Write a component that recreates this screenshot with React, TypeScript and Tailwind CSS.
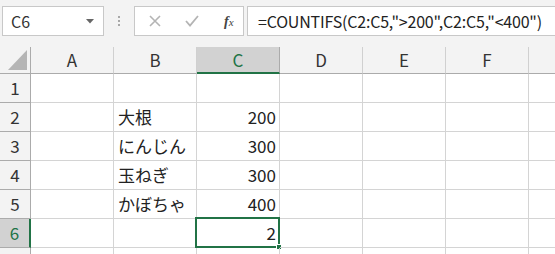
import React from "react";

const font = { fontFamily: '"Noto Sans CJK JP", "Noto Sans", sans-serif' };

const cols = ["A", "B", "C", "D", "E", "F", "G"];
const rows: { b?: string; c?: string }[] = [
  {},
  { b: "大根", c: "200" },
  { b: "にんじん", c: "300" },
  { b: "玉ねぎ", c: "300" },
  { b: "かぼちゃ", c: "400" },
  { c: "2" },
  {},
];

export default function App() {
  return (
    <div className="w-[555px] h-[254px] overflow-hidden bg-white text-[#222]" style={font}>
      {/* toolbar */}
      <div className="h-[47px] bg-[#f3f3f3] flex items-start pt-[6px]">
        <div className="ml-[2px] w-[102px] h-[30px] bg-white border border-[#c8c8c8] flex items-center justify-between pl-[8px] pr-[9px]">
          <span className="text-[16px] text-[#333]">C6</span>
          <svg width="8" height="5" viewBox="0 0 8 5">
            <path d="M0 0 L8 0 L4 4.5 Z" fill="#666" />
          </svg>
        </div>
        <div className="w-[30px] h-[30px] flex flex-col items-center justify-center gap-[2px]">
          <div className="w-[2px] h-[2px] bg-[#a8a8a8]" />
          <div className="w-[2px] h-[2px] bg-[#a8a8a8]" />
          <div className="w-[2px] h-[2px] bg-[#a8a8a8]" />
        </div>
        <div className="w-[110px] h-[30px] bg-white border border-[#c8c8c8] flex items-center">
          <svg className="ml-[14px]" width="12" height="12" viewBox="0 0 12 12">
            <path d="M1 1 L11 11 M11 1 L1 11" stroke="#b4b4b4" strokeWidth="1.6" />
          </svg>
          <svg className="ml-[24px]" width="14" height="12" viewBox="0 0 14 12">
            <path d="M1 6 L5 10.5 L13 1" stroke="#b4b4b4" strokeWidth="1.8" fill="none" />
          </svg>
          <span
            className="ml-[25px] text-[14px] italic text-[#444]"
            style={{ fontFamily: '"Liberation Serif", serif' }}
          >
            <span className="font-bold">f</span>
            <span className="text-[11px]">x</span>
          </span>
        </div>
        <div className="ml-[3px] flex-1 h-[30px] bg-white border-y border-l border-[#c8c8c8] flex items-center pl-[10px]">
          <span className="text-[16px] text-[#222] whitespace-nowrap tracking-[-0.2px]">
            =COUNTIFS(C2:C5,"&gt;200",C2:C5,"&lt;400")
          </span>
        </div>
      </div>
      {/* header row */}
      <div className="flex h-[27px] bg-[#f3f3f3]">
        <div className="w-[31px] shrink-0 border-r border-[#ababab] border-b border-b-[#ababab] relative">
          <svg className="absolute left-[8px] top-[3px]" width="19" height="20" viewBox="0 0 19 20">
            <path d="M19 0 L19 20 L0 20 Z" fill="#b5b5b5" />
          </svg>
        </div>
        {cols.map((c) =>
          c === "C" ? (
            <div
              key={c}
              className="w-[83px] shrink-0 bg-[#d2d2d2] border-r border-[#ababab] border-b-[2px] border-b-[#217346] flex items-center justify-center text-[17px] text-[#217346]"
            >
              {c}
            </div>
          ) : (
            <div
              key={c}
              className="w-[83px] shrink-0 border-r border-[#d0d0d0] border-b border-b-[#ababab] flex items-center justify-center text-[17px] text-[#333]"
            >
              {c === "G" ? "" : c}
            </div>
          )
        )}
      </div>
      {/* body rows */}
      {rows.map((r, i) => {
        const n = i + 1;
        const sel = n === 6;
        return (
          <div key={n} className="flex h-[29px]">
            <div
              className={
                sel
                  ? "w-[31px] shrink-0 bg-[#d2d2d2] border-r-[2px] border-r-[#217346] border-b border-b-[#ababab] flex items-center justify-center text-[17px] text-[#217346]"
                  : "w-[31px] shrink-0 bg-[#f3f3f3] border-r border-r-[#ababab] border-b border-b-[#ababab] flex items-center justify-center text-[17px] text-[#333]"
              }
            >
              {n === 7 ? "" : n}
            </div>
            {cols.map((c) => {
              const isSel = sel && c === "C";
              const txt = c === "B" ? r.b : c === "C" ? r.c : undefined;
              return (
                <div
                  key={c}
                  className={
                    "w-[83px] shrink-0 border-r border-b border-[#d4d4d4] flex items-center text-[17px] text-[#222] relative " +
                    (c === "C" ? "justify-end pr-[3px]" : "justify-start pl-[4px]")
                  }
                >
                  {txt}
                  {isSel && (
                    <>
                      <div className="absolute left-[-2px] top-[-2px] right-[-1px] bottom-[-1px] border-[2px] border-[#217346] pointer-events-none" />
                      <div className="absolute right-[-3px] bottom-[-3px] w-[6px] h-[6px] bg-[#217346] border border-white" />
                    </>
                  )}
                </div>
              );
            })}
          </div>
        );
      })}
    </div>
  );
}
